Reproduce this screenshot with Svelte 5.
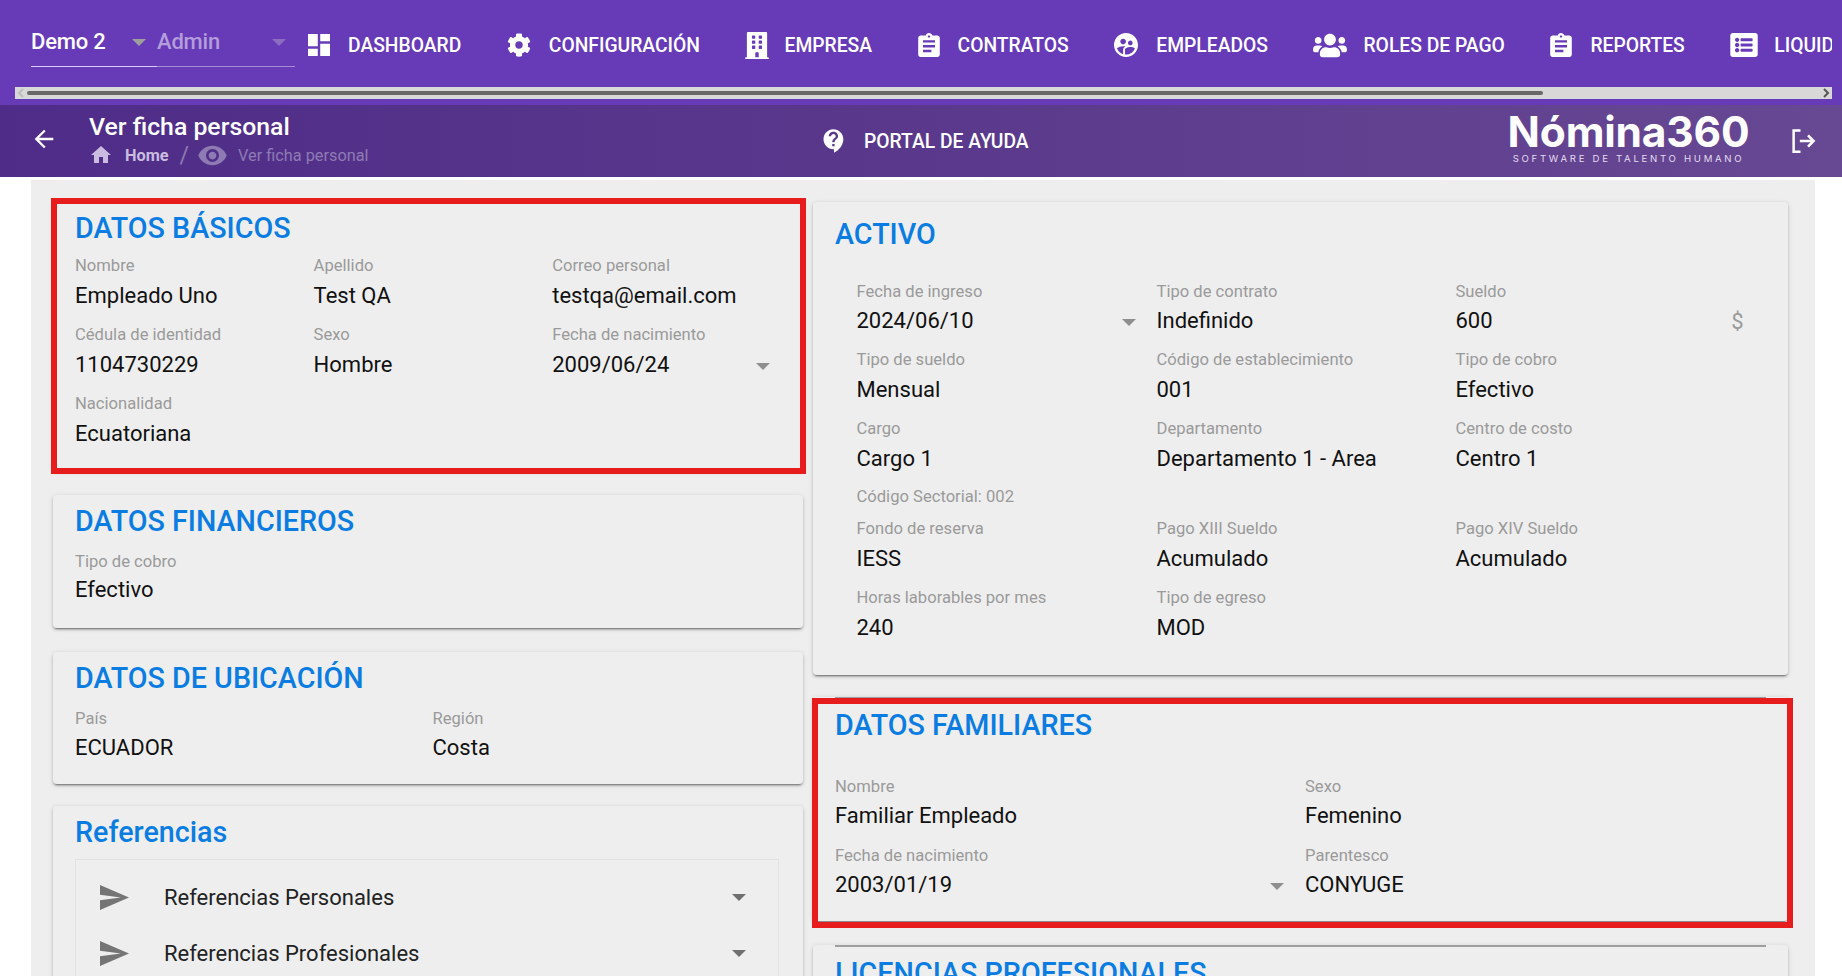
<script>
  const navItems = [
    { label: 'DASHBOARD', box: '3 3 18 18', w: 22, h: 24, gap: 18, path: 'M3 13h8V3H3v10zm0 8h8v-6H3v6zm10 0h8V11h-8v10zm0-18v6h8V3h-8z' },
    { label: 'CONFIGURACIÓN', box: '0 0 512 512', w: 24, h: 24, gap: 18, path: 'M487.4 315.7l-42.6-24.6c4.3-23.2 4.3-47 0-70.2l42.6-24.6c4.9-2.8 7.1-8.6 5.5-14-11.1-35.6-30-67.8-54.7-94.6-3.8-4.1-10-5.1-14.8-2.3L380.8 110c-17.9-15.4-38.5-27.3-60.8-35.1V25.8c0-5.6-3.9-10.5-9.4-11.7-36.7-8.2-74.3-7.8-109.2 0-5.5 1.2-9.4 6.1-9.4 11.7V75c-22.2 7.9-42.8 19.8-60.8 35.1L88.7 85.5c-4.9-2.8-11-1.9-14.8 2.3-24.7 26.7-43.6 58.9-54.7 94.6-1.7 5.4.6 11.2 5.5 14L67.3 221c-4.3 23.2-4.3 47 0 70.2l-42.6 24.6c-4.9 2.8-7.1 8.6-5.5 14 11.1 35.6 30 67.8 54.7 94.6 3.8 4.1 10 5.1 14.8 2.3l42.6-24.6c17.9 15.4 38.5 27.3 60.8 35.1v49.2c0 5.6 3.9 10.5 9.4 11.7 36.7 8.2 74.3 7.8 109.2 0 5.5-1.2 9.4-6.1 9.4-11.7v-49.2c22.2-7.9 42.8-19.8 60.8-35.1l42.6 24.6c4.9 2.8 11 1.9 14.8-2.3 24.7-26.7 43.6-58.9 54.7-94.6 1.5-5.5-.7-11.3-5.6-14.1zM256 336c-44.1 0-80-35.9-80-80s35.9-80 80-80 80 35.9 80 80-35.9 80-80 80z' },
    { label: 'EMPRESA', box: '0 0 448 512', w: 24, h: 27, gap: 15, path: 'M436 480h-20V24c0-13.255-10.745-24-24-24H56C42.745 0 32 10.745 32 24v456H12c-6.627 0-12 5.373-12 12v20h448v-20c0-6.627-5.373-12-12-12zM128 76c0-6.627 5.373-12 12-12h40c6.627 0 12 5.373 12 12v40c0 6.627-5.373 12-12 12h-40c-6.627 0-12-5.373-12-12V76zm0 96c0-6.627 5.373-12 12-12h40c6.627 0 12 5.373 12 12v40c0 6.627-5.373 12-12 12h-40c-6.627 0-12-5.373-12-12v-40zm52 148h-40c-6.627 0-12-5.373-12-12v-40c0-6.627 5.373-12 12-12h40c6.627 0 12 5.373 12 12v40c0 6.627-5.373 12-12 12zm76 160h-64v-84c0-6.627 5.373-12 12-12h40c6.627 0 12 5.373 12 12v84zm64-172c0 6.627-5.373 12-12 12h-40c-6.627 0-12-5.373-12-12v-40c0-6.627 5.373-12 12-12h40c6.627 0 12 5.373 12 12v40zm0-96c0 6.627-5.373 12-12 12h-40c-6.627 0-12-5.373-12-12v-40c0-6.627 5.373-12 12-12h40c6.627 0 12 5.373 12 12v40zm0-96c0 6.627-5.373 12-12 12h-40c-6.627 0-12-5.373-12-12V76c0-6.627 5.373-12 12-12h40c6.627 0 12 5.373 12 12v40z' },
    { label: 'CONTRATOS', box: '3 1 18 20', w: 22, h: 24, gap: 18, path: 'M19 3h-4.18C14.4 1.84 13.3 1 12 1c-1.3 0-2.4.84-2.82 2H5c-1.1 0-2 .9-2 2v14c0 1.1.9 2 2 2h14c1.1 0 2-.9 2-2V5c0-1.1-.9-2-2-2zm-7 0c.55 0 1 .45 1 1s-.45 1-1 1-1-.45-1-1 .45-1 1-1zm2 14H7v-2h7v2zm3-4H7v-2h10v2zm0-4H7V7h10v2z' },
    { label: 'EMPLEADOS', box: '2 2 20 20', w: 24, h: 24, gap: 18, path: 'M11.99 2c-5.52 0-10 4.48-10 10s4.48 10 10 10 10-4.48 10-10-4.48-10-10-10zm3.61 6.34c1.07 0 1.93.86 1.93 1.93 0 1.07-.86 1.93-1.93 1.93-1.07 0-1.93-.86-1.93-1.93-.01-1.07.86-1.93 1.93-1.93zm-6-1.58c1.3 0 2.36 1.06 2.36 2.36 0 1.3-1.06 2.36-2.36 2.36s-2.36-1.06-2.36-2.36c0-1.31 1.05-2.36 2.36-2.36zm0 9.13v3.75c-2.4-.75-4.3-2.6-5.14-4.96 1.05-1.12 3.67-1.69 5.14-1.69.53 0 1.2.08 1.9.22-1.64.87-1.9 2.02-1.9 2.68zM11.99 20c-.27 0-.53-.01-.79-.04v-4.07c0-1.42 2.94-2.13 4.4-2.13 1.07 0 2.92.39 3.84 1.15-1.17 2.97-4.06 5.09-7.45 5.09z' },
    { label: 'ROLES DE PAGO', box: '0 0 640 512', w: 34, h: 27, gap: 16, path: 'M96 224c35.3 0 64-28.7 64-64s-28.7-64-64-64-64 28.7-64 64 28.7 64 64 64zm448 0c35.3 0 64-28.7 64-64s-28.7-64-64-64-64 28.7-64 64 28.7 64 64 64zm32 32h-64c-17.6 0-33.5 7.1-45.1 18.6 40.3 22.1 68.9 62 75.1 109.4h66c17.7 0 32-14.3 32-32v-32c0-35.3-28.7-64-64-64zm-256 0c61.9 0 112-50.1 112-112S381.9 32 320 32 208 82.1 208 144s50.1 112 112 112zm76.8 32h-8.3c-20.8 10-43.9 16-68.5 16s-47.6-6-68.5-16h-8.3C179.6 288 128 339.6 128 403.2V432c0 26.5 21.5 48 48 48h288c26.5 0 48-21.5 48-48v-28.8c0-63.6-51.6-115.2-115.2-115.2zm-223.7-13.4C161.5 263.1 145.6 256 128 256H64c-35.3 0-64 28.7-64 64v32c0 17.7 14.3 32 32 32h65.9c6.3-47.4 34.9-87.3 75.2-109.4z' },
    { label: 'REPORTES', box: '3 1 18 20', w: 22, h: 24, gap: 18, path: 'M19 3h-4.18C14.4 1.84 13.3 1 12 1c-1.3 0-2.4.84-2.82 2H5c-1.1 0-2 .9-2 2v14c0 1.1.9 2 2 2h14c1.1 0 2-.9 2-2V5c0-1.1-.9-2-2-2zm-7 0c.55 0 1 .45 1 1s-.45 1-1 1-1-.45-1-1 .45-1 1-1zm2 14H7v-2h7v2zm3-4H7v-2h10v2zm0-4H7V7h10v2z' },
    { label: 'LIQUIDACIONES', box: '0 32 512 448', w: 28, h: 24, gap: 16, path: 'M464 480H48c-26.51 0-48-21.49-48-48V80c0-26.51 21.49-48 48-48h416c26.51 0 48 21.49 48 48v352c0 26.51-21.49 48-48 48zM128 120c-22.091 0-40 17.909-40 40s17.909 40 40 40 40-17.909 40-40-17.909-40-40-40zm0 96c-22.091 0-40 17.909-40 40s17.909 40 40 40 40-17.909 40-40-17.909-40-40-40zm0 96c-22.091 0-40 17.909-40 40s17.909 40 40 40 40-17.909 40-40-17.909-40-40-40zm288-136v-32c0-6.627-5.373-12-12-12H204c-6.627 0-12 5.373-12 12v32c0 6.627 5.373 12 12 12h200c6.627 0 12-5.373 12-12zm0 96v-32c0-6.627-5.373-12-12-12H204c-6.627 0-12 5.373-12 12v32c0 6.627 5.373 12 12 12h200c6.627 0 12-5.373 12-12zm0 96v-32c0-6.627-5.373-12-12-12H204c-6.627 0-12 5.373-12 12v32c0 6.627 5.373 12 12 12h200c6.627 0 12-5.373 12-12z' }
  ];

  const basicos = [
    { label: 'Nombre', value: 'Empleado Uno' },
    { label: 'Apellido', value: 'Test QA' },
    { label: 'Correo personal', value: 'testqa@email.com' },
    { label: 'Cédula de identidad', value: '1104730229' },
    { label: 'Sexo', value: 'Hombre' },
    { label: 'Fecha de nacimiento', value: '2009/06/24', caret: true },
    { label: 'Nacionalidad', value: 'Ecuatoriana' }
  ];

  const activoTop = [
    { label: 'Fecha de ingreso', value: '2024/06/10', caret: true },
    { label: 'Tipo de contrato', value: 'Indefinido' },
    { label: 'Sueldo', value: '600', suffix: '$' },
    { label: 'Tipo de sueldo', value: 'Mensual' },
    { label: 'Código de establecimiento', value: '001' },
    { label: 'Tipo de cobro', value: 'Efectivo' },
    { label: 'Cargo', value: 'Cargo 1' },
    { label: 'Departamento', value: 'Departamento 1 - Area' },
    { label: 'Centro de costo', value: 'Centro 1' }
  ];

  const activoBottom = [
    { label: 'Fondo de reserva', value: 'IESS' },
    { label: 'Pago XIII Sueldo', value: 'Acumulado' },
    { label: 'Pago XIV Sueldo', value: 'Acumulado' },
    { label: 'Horas laborables por mes', value: '240' },
    { label: 'Tipo de egreso', value: 'MOD' }
  ];

  const familiares = [
    { label: 'Nombre', value: 'Familiar Empleado' },
    { label: 'Sexo', value: 'Femenino' },
    { label: 'Fecha de nacimiento', value: '2003/01/19', caret: true },
    { label: 'Parentesco', value: 'CONYUGE' }
  ];

  const referencias = ['Referencias Personales', 'Referencias Profesionales'];
</script>

{#snippet field(f)}
  <div class="field">
    <span class="label">{f.label}</span>
    <span class="value">{f.value}</span>
    {#if f.caret}<i class="caret"></i>{/if}
    {#if f.suffix}<span class="suffix">{f.suffix}</span>{/if}
  </div>
{/snippet}

<header class="topbar">
  <nav class="nav">
    <div class="selects">
      <span class="sel sel-a">Demo 2<i class="caret"></i></span>
      <span class="sel sel-b">Admin<i class="caret"></i></span>
    </div>
    {#each navItems as item}
      <a class="nav-item" style={`gap: ${item.gap}px`}>
        <svg style={`width: ${item.w}px; height: ${item.h}px`} viewBox={item.box}><path d={item.path} /></svg>
        {item.label}
      </a>
    {/each}
  </nav>
  <div class="scrollbar">
    <svg class="sb-arrow" width="12" height="12" viewBox="0 0 12 12"><path d="M8 2 4 6l4 4" /></svg>
    <div class="sb-track"><div class="sb-thumb"></div></div>
    <svg class="sb-arrow dark" width="12" height="12" viewBox="0 0 12 12"><path d="M4 2l4 4-4 4" /></svg>
  </div>
</header>

<div class="subbar">
  <svg class="back" width="28" height="28" viewBox="0 0 24 24"><path d="M20 11H7.830l5.590-5.590L12 4l-8 8 8 8 1.410-1.410L7.830 13H20v-2z" /></svg>
  <div class="crumbs">
    <h1>Ver ficha personal</h1>
    <div class="trail">
      <svg width="24" height="24" viewBox="0 0 24 24"><path d="M10 20v-6h4v6h5v-8h3L12 3 2 12h3v8z" /></svg>
      <strong>Home</strong>
      <span class="slash">/</span>
      <svg class="eye" width="31" height="31" viewBox="0 0 24 24"><path d="M12 4.500C7 4.500 2.730 7.610 1 12c1.730 4.390 6 7.500 11 7.500s9.270-3.110 11-7.500c-1.730-4.390-6-7.500-11-7.500zM12 17c-2.760 0-5-2.240-5-5s2.240-5 5-5 5 2.240 5 5-2.240 5-5 5zm0-8c-1.660 0-3 1.340-3 3s1.340 3 3 3 3-1.340 3-3-1.340-3-3-3z" /></svg>
      <span class="current">Ver ficha personal</span>
    </div>
  </div>
  <a class="help">
    <svg width="28" height="28" viewBox="0 0 24 24"><path d="M11.500 2C6.810 2 3 5.810 3 10.500S6.810 19 11.500 19h.5v3c4.860-2.340 8-7 8-11.500C20 5.810 16.190 2 11.500 2zm1 14.500h-2v-2h2v2zm0-3.500h-2c0-3.250 3-3 3-5 0-1.100-.9-2-2-2s-2 .9-2 2h-2c0-2.210 1.790-4 4-4s4 1.790 4 4c0 2.500-3 2.750-3 5z" /></svg>
    PORTAL DE AYUDA
  </a>
  <div class="logo">
    <span class="logo-name">Nómina360</span>
    <span class="logo-tag">SOFTWARE DE TALENTO HUMANO</span>
  </div>
  <svg class="logout" width="30" height="30" viewBox="0 0 24 24"><path d="M10 3.500H4.500v17H10M9.500 12h11M16 7.500l4.500 4.500-4.500 4.500" /></svg>
</div>

<main class="panel">
  <div class="column left">
    <section class="card basicos">
      <h2>DATOS BÁSICOS</h2>
      <div class="grid three">
        {#each basicos as f}{@render field(f)}{/each}
      </div>
      <div class="mark mark-basicos"></div>
    </section>

    <section class="card single fin">
      <h2>DATOS FINANCIEROS</h2>
      <div class="grid three">
        {@render field({ label: 'Tipo de cobro', value: 'Efectivo' })}
      </div>
    </section>

    <section class="card single">
      <h2>DATOS DE UBICACIÓN</h2>
      <div class="grid two-ub">
        {@render field({ label: 'País', value: 'ECUADOR' })}
        {@render field({ label: 'Región', value: 'Costa' })}
      </div>
    </section>

    <section class="card refs">
      <h2>Referencias</h2>
      <div class="ref-box">
        {#each referencias as r}
          <div class="ref-row">
            <svg width="29" height="25" viewBox="2 3 21 18" preserveAspectRatio="none"><path d="M2.010 21L23 12 2.010 3 2 10l15 2-15 2z" /></svg>
            <span>{r}</span>
            <i class="caret dark"></i>
          </div>
        {/each}
      </div>
    </section>
  </div>

  <div class="column right">
    <section class="card activo">
      <h2>ACTIVO</h2>
      <div class="grid act">
        {#each activoTop as f}{@render field(f)}{/each}
      </div>
      <p class="sector">Código Sectorial: 002</p>
      <div class="grid act">
        {#each activoBottom as f}{@render field(f)}{/each}
      </div>
    </section>

    <section class="card ruled familiares">
      <hr />
      <h2>DATOS FAMILIARES</h2>
      <div class="grid two">
        {#each familiares as f}{@render field(f)}{/each}
      </div>
      <div class="mark mark-familiares"></div>
    </section>

    <section class="card ruled">
      <hr />
      <h2>LICENCIAS PROFESIONALES</h2>
    </section>
  </div>
</main>

<style>
  :global(html),
  :global(body) {
    margin: 0;
    height: 976px;
    overflow: hidden;
    background: #fff;
    font-family: Roboto, 'Liberation Sans', sans-serif;
  }

  .topbar {
    height: 105px;
    background: #673ab7;
    overflow: hidden;
  }

  .nav {
    display: flex;
    align-items: center;
    gap: 45.5px;
    height: 87px;
    width: 1832px;
    overflow: hidden;
    padding-left: 31px;
    box-sizing: border-box;
    white-space: nowrap;
  }

  .selects {
    display: flex;
    width: 264px;
    flex: none;
    margin-right: -32.5px;
    margin-top: -5px;
    height: 52px;
    font-size: 22px;
    font-weight: 500;
  }

  .sel {
    position: relative;
    display: block;
    line-height: 26px;
    padding-top: 14px;
    height: 52px;
    box-sizing: border-box;
    letter-spacing: -0.2px;
  }

  .sel .caret {
    position: absolute;
    top: 24px;
    right: 11px;
    border-top-color: #9e9e9e;
  }

  .sel-a {
    width: 126px;
    color: #fff;
    border-bottom: 1.5px solid #d9cdef;
  }

  .sel-b {
    width: 138px;
    color: #b39ddb;
    border-bottom: 1.5px solid #a78bd4;
  }

  .sel-b .caret {
    right: 9px;
    border-top-color: #8a6cc0;
  }

  .nav-item {
    display: flex;
    align-items: center;
    flex: none;
    margin-top: 3px;
    color: #fff;
    font-size: 19.3px;
    font-weight: 500;
  }

  .nav-item svg {
    fill: #fff;
    flex: none;
  }

  .scrollbar {
    display: flex;
    align-items: center;
    height: 12px;
    width: 1817px;
    margin-left: 15px;
    background: #d8d8d8;
  }

  .sb-arrow {
    flex: none;
    fill: none;
    stroke: #bdbdbd;
    stroke-width: 2;
  }

  .sb-arrow.dark {
    stroke: #555;
  }

  .sb-track {
    flex: 1;
  }

  .sb-thumb {
    width: 1516px;
    height: 4px;
    border-radius: 2px;
    background: #686868;
  }

  .subbar {
    display: flex;
    align-items: center;
    height: 72px;
    padding-left: 30px;
    color: #fff;
    background: linear-gradient(90deg, #4e2c88 0%, #5a398c 50%, #674893 100%);
  }

  .back {
    fill: #fff;
    flex: none;
    margin-top: -4px;
  }

  .crumbs {
    width: 731px;
    margin-left: 31px;
    flex: none;
  }

  h1 {
    margin: -1px 0 1px;
    font-size: 24.8px;
    line-height: 28px;
    font-weight: 500;
  }

  .trail {
    display: flex;
    align-items: center;
    height: 26px;
    font-size: 16.3px;
  }

  .trail svg {
    fill: #c9bce0;
    flex: none;
  }

  .trail strong {
    margin-left: 12px;
    font-weight: 700;
    color: #c9bce0;
  }

  .slash {
    margin: 0 8px 0 11px;
    font-size: 23px;
    color: #8f7bb3;
  }

  .trail svg.eye {
    fill: #8f7bb3;
  }

  .current {
    margin-left: 10px;
    color: #8f7bb3;
  }

  .help {
    display: flex;
    align-items: center;
    gap: 16px;
    width: 687px;
    flex: none;
    font-size: 19.3px;
    font-weight: 500;
  }

  .help svg {
    fill: #fff;
  }

  .logo {
    display: flex;
    flex-direction: column;
    align-items: center;
    width: 243px;
    flex: none;
    margin-top: -6px;
  }

  .logo-name {
    font-family: Inter, sans-serif;
    font-size: 42.5px;
    font-weight: 700;
    line-height: 41px;
    letter-spacing: -0.2px;
    white-space: nowrap;
  }

  .logo-tag {
    font-family: Inter, sans-serif;
    font-size: 9.6px;
    letter-spacing: 2.7px;
    line-height: 14px;
    color: #e4dcef;
    white-space: nowrap;
  }

  .logout {
    flex: none;
    margin-left: 38px;
    fill: none;
    stroke: #fff;
    stroke-width: 2;
  }

  .panel {
    display: grid;
    grid-template-columns: 750px 975px;
    gap: 10px;
    width: 1784px;
    height: 796px;
    margin: 3px 0 0 31px;
    padding: 22px 0 0 22px;
    box-sizing: border-box;
    background: #eeeeee;
    overflow: hidden;
  }

  .column {
    display: flex;
    flex-direction: column;
    gap: 24px;
    min-width: 0;
  }

  .card {
    position: relative;
    flex: none;
    padding: 9px 22px 20px;
    background: #eeeeee;
    border-radius: 4px;
    box-shadow:
      0 3px 1px -2px rgba(0, 0, 0, 0.25),
      0 2px 2px rgba(0, 0, 0, 0.2),
      0 1px 5px rgba(0, 0, 0, 0.15);
  }

  h2 {
    margin: 0;
    font-size: 28.7px;
    line-height: 34px;
    font-weight: 500;
    color: #0a7ce2;
  }

  .grid {
    display: grid;
  }

  .three {
    grid-template-columns: repeat(3, 238.6px);
  }

  .two-ub {
    grid-template-columns: 357.5px 1fr;
  }

  .two {
    grid-template-columns: 470px 1fr;
  }

  .act {
    grid-template-columns: 300px 299px 295px;
  }

  .field {
    position: relative;
    height: 68.8px;
    padding-top: 11.5px;
    box-sizing: border-box;
  }

  .label {
    display: block;
    font-size: 16.6px;
    line-height: 20px;
    color: #9a9a9a;
  }

  .value {
    display: block;
    margin-top: 5px;
    font-size: 22px;
    line-height: 29px;
    color: #111;
  }

  .basicos {
    padding-bottom: 18px;
  }

  .basicos .field {
    height: 69.2px;
    padding-top: 10.5px;
  }

  .single .field {
    padding-top: 14px;
  }

  .single .value {
    margin-top: 3.7px;
  }

  .fin {
    padding-bottom: 21.5px;
  }

  .caret {
    display: block;
    width: 0;
    height: 0;
    border-left: 7px solid transparent;
    border-right: 7px solid transparent;
    border-top: 7px solid #8e8e8e;
  }

  .field .caret {
    position: absolute;
    top: 49px;
    right: 21px;
  }

  .suffix {
    position: absolute;
    top: 36.5px;
    right: 7px;
    font-size: 22px;
    line-height: 29px;
    color: #9a9a9a;
  }

  .refs {
    margin-top: -2px;
  }

  .ref-box {
    margin: 10px 2px 0 0;
    padding: 10px 0 0;
    border: 1px solid #e2e2e2;
    height: 200px;
  }

  .ref-row {
    display: flex;
    align-items: center;
    height: 56px;
    padding-left: 24px;
    font-size: 22px;
    color: #222;
  }

  .ref-row svg {
    fill: #757575;
    flex: none;
  }

  .ref-row span {
    margin-left: 35px;
    flex: 1;
  }

  .ref-row .caret {
    margin-right: 32px;
  }

  .caret.dark {
    border-top-color: #707070;
  }

  .activo {
    padding: 15px 22px 20px;
    height: 473px;
    box-sizing: border-box;
  }

  .activo .grid {
    padding-left: 21.5px;
  }

  .activo .value {
    margin-top: 4.5px;
  }

  .activo h2 {
    margin-bottom: 19px;
  }

  .sector {
    margin: -0.5px 0 1px;
    padding: 11px 0 0 21.5px;
    font-size: 16.6px;
    line-height: 20px;
    color: #9a9a9a;
  }

  .ruled {
    padding-top: 0;
  }

  hr {
    height: 2px;
    margin: 0 0 9px;
    border: 0;
    background: #9e9e9e;
  }

  .familiares {
    height: 224px;
    margin-top: -2px;
    box-sizing: border-box;
  }

  .familiares h2 {
    margin-bottom: 23.5px;
  }

  .familiares .value {
    margin-top: 4px;
  }

  .mark {
    position: absolute;
    border: 6px solid #e71c1c;
    pointer-events: none;
  }

  .mark-basicos {
    inset: -4px -3px -3px -2px;
  }

  .mark-familiares {
    inset: 1px -5px -7px -1px;
  }
</style>
